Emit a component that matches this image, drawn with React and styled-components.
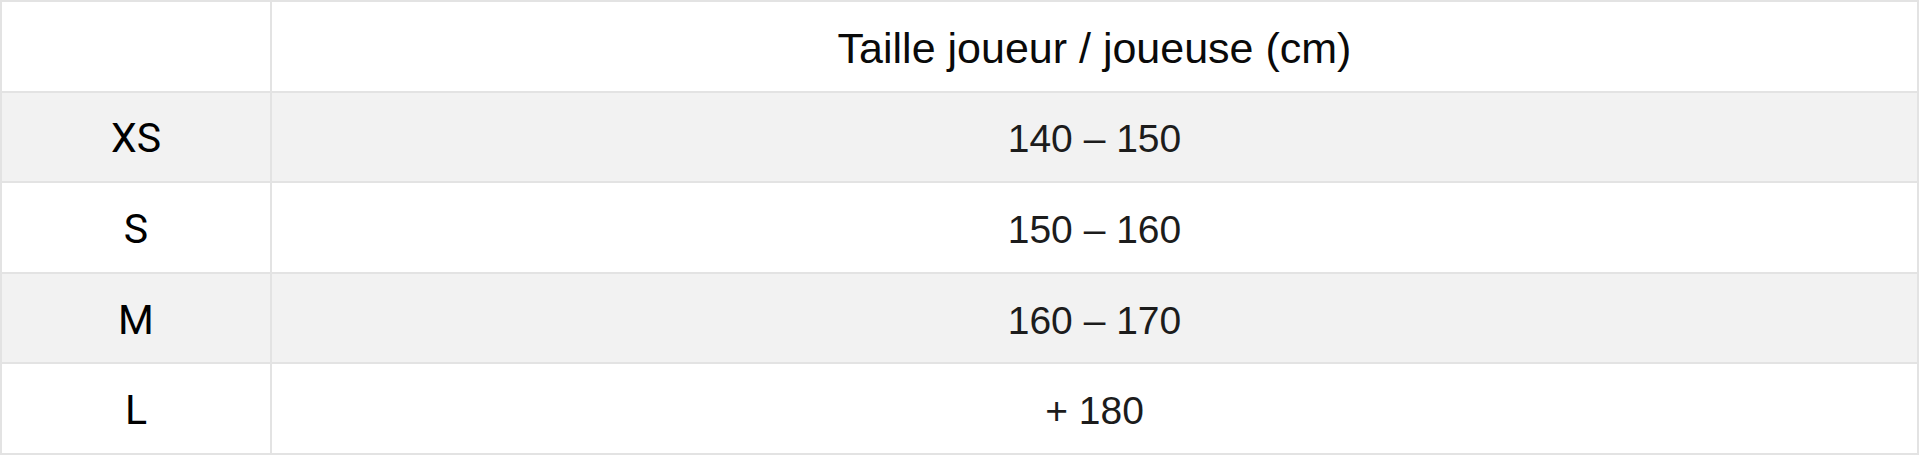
import React from 'react'
import styled, { createGlobalStyle } from 'styled-components'

const GlobalStyle = createGlobalStyle`
    body {
        margin: 0;
        background: #ffffff;
        font-family: "Liberation Sans", Arial, sans-serif;
    }
`

const rows = [
    { size: 'XS', range: '140 – 150' },
    { size: 'S', range: '150 – 160' },
    { size: 'M', range: '160 – 170' },
    { size: 'L', range: '+ 180' },
]

const App = () => {
    return (
        <>
            <GlobalStyle />
            <SizeTable>
                <Row>
                    <SizeCell />
                    <HeadCell>Taille joueur / joueuse (cm)</HeadCell>
                </Row>
                {rows.map((r, i) => (
                    <Row key={r.size} striped={i % 2 === 0}>
                        <SizeCell>{r.size}</SizeCell>
                        <ValueCell>{r.range}</ValueCell>
                    </Row>
                ))}
            </SizeTable>
        </>
    )
}

export default App

const SizeTable = styled.div`
    width: 1919px;
    box-sizing: border-box;
    border-top: 2px solid #e3e3e3;
    border-left: 2px solid #e3e3e3;
    border-right: 2px solid #e3e3e3;
`

const Row = styled.div.withConfig({ shouldForwardProp: p => p !== 'striped' })`
    display: grid;
    grid-template-columns: 270px 1fr;
    height: 90.6px;
    box-sizing: border-box;
    border-bottom: 2px solid #e3e3e3;
    background: ${p => (p.striped ? '#f2f2f2' : '#ffffff')};
`

const Cell = styled.div`
    display: flex;
    align-items: center;
    justify-content: center;
    padding-top: 4px;
    box-sizing: border-box;
    line-height: 1;
    color: #000;
`

const SizeCell = styled(Cell)`
    border-right: 2px solid #e3e3e3;
    font-family: Roboto, "Liberation Sans", sans-serif;
    font-size: 41px;
`

const HeadCell = styled(Cell)`
    font-size: 43px;
    color: #0a0a0a;
`

const ValueCell = styled(Cell)`
    font-size: 39px;
    color: #1c1c1c;
`
